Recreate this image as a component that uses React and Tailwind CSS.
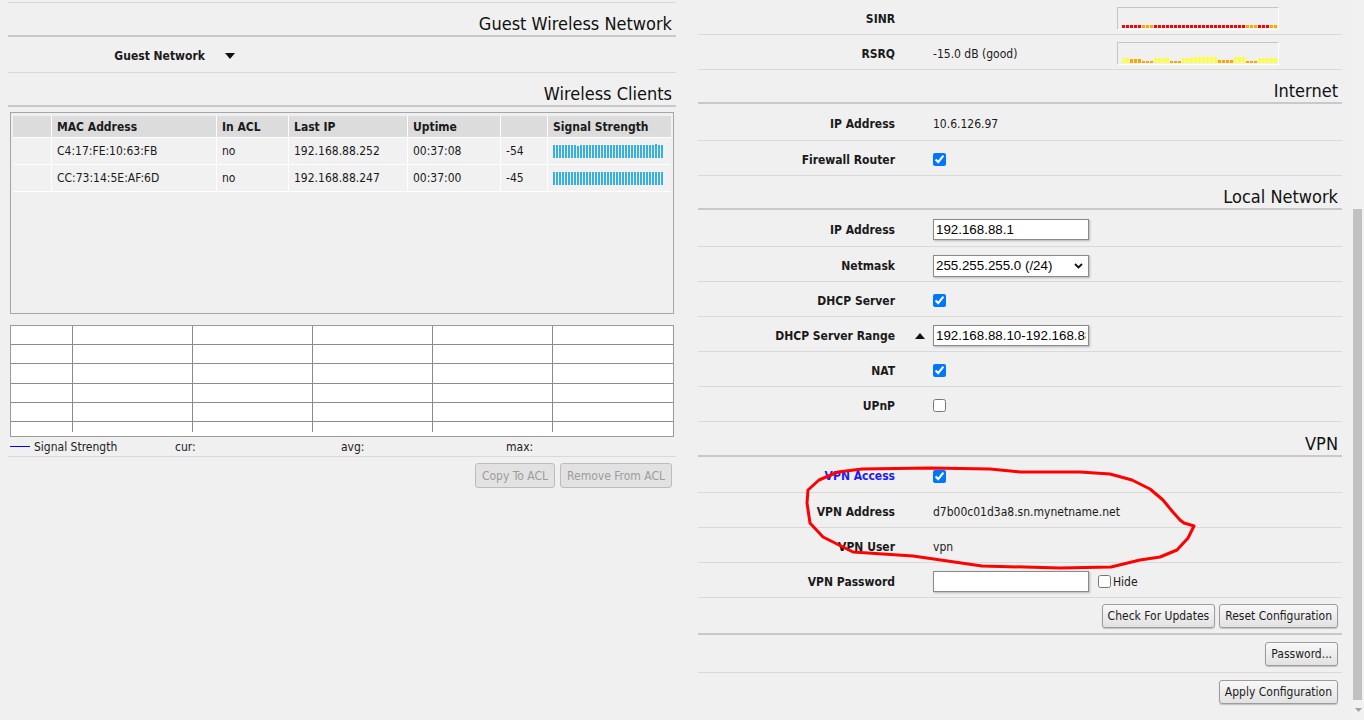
import React from "react";

const sinr = [
  "r","r","r","r","r","o","o","o",
  ...Array(23).fill("r"),
  "o","o","o","r","r","r","o","o",
];

// [color, height]
const rsrq = [
  ["y",5],["y",5],
  ["o",4],["o",4],["o",4],
  ["o",2],["o",2],["o",2],
  ["y",5],["y",5],["y",5],["y",5],
  ["o",2],["o",2],["o",2],
  ["y",5],["y",5],["y",5],
  ["y",6],["y",6],["y",6],["y",6],["y",6],["y",6],
  ["o",3],["o",3],["o",3],["o",3],
  ["y",6],["y",6],["y",6],
  ["o",2],["o",2],["o",2],
  ["y",5],["y",5],["y",5],["y",5],["y",5],
];

const clients = [
  { mac: "C4:17:FE:10:63:FB", acl: "no", ip: "192.168.88.252", up: "00:37:08", sig: "-54", bars: [13,13,13,13,13,13,13,13,12,13,13,13,13,13,13,13,13,13,13,13,13,13,13,13,13,13,13,13,13,13,13,13,13,13,14,13,13] },
  { mac: "CC:73:14:5E:AF:6D", acl: "no", ip: "192.168.88.247", up: "00:37:00", sig: "-45", bars: Array(37).fill(13) },
];

const rowCls = "flex items-center pt-[3px] border-b border-[#d9d9d9]";
const labelCls = "w-[197px] shrink-0 text-right font-bold text-[12px] text-[#1a1a1a]";

function Heading({ title, h = "h-[34px]" }) {
  return (
    <div className={`${h} flex items-end justify-end pr-[4px] pb-[2px] border-b-2 border-[#c9c9c9] text-[18px] leading-[18px] text-[#111]`}>
      {title}
    </div>
  );
}

function Check({ on }) {
  return <input type="checkbox" defaultChecked={on} className="m-0 w-[13px] h-[13px]" />;
}

function Field({ value, w = "w-[156px]" }) {
  return (
    <input
      type="text"
      defaultValue={value}
      className={`${w} h-[21px] border border-[#8a8a8a] bg-white px-[2px] text-[13.33px] font-['Liberation_Sans',sans-serif] text-black shadow-[1px_1px_2px_rgba(0,0,0,0.25)] outline-none`}
    />
  );
}

function Btn({ children, disabled }) {
  return (
    <button
      className={
        disabled
          ? "h-[25px] px-[6px] rounded-[3px] border border-[#bdbdbd] bg-[#e2e2e2] text-[12px] text-[#9c9c9c]"
          : "h-[24px] px-[5px] rounded-[3px] border border-[#9c9c9c] bg-linear-to-b from-[#f8f8f8] to-[#e2e2e2] text-[12px] text-[#1c1c1c] shadow-[0_1px_1px_rgba(0,0,0,0.2)]"
      }
    >
      {children}
    </button>
  );
}

function MiniChart({ children }) {
  return (
    <div className="w-[162px] h-[23px] border-t border-l border-[#c6c6c6] border-r border-b border-r-white border-b-white flex items-end gap-px pl-[4px] pb-px">
      {children}
    </div>
  );
}

function LeftColumn() {
  const th = "bg-[#dcdcdc] h-[21px] flex items-center px-[5px] font-bold text-[12px]";
  const td = "bg-[#f1f1f1] h-[26px] flex items-center px-[5px] text-[12px]";
  return (
    <div className="w-[668px] shrink-0">
      <div className="h-[3px] border-b border-[#d9d9d9]" />
      <Heading title="Guest Wireless Network" />
      <div className={`${rowCls} h-[36px]`}>
        <div className={labelCls}>Guest Network</div>
        <svg className="ml-[20px]" width="10" height="6" viewBox="0 0 10 6">
          <path d="M0 0 L10 0 L5 6 Z" fill="#111" />
        </svg>
      </div>
      <Heading title="Wireless Clients" />

      {/* clients table */}
      <div className="mt-[5px] ml-[2px] w-[664px] h-[202px] border border-[#a5a5a5] px-[2px] pt-[3px]">
        <div className="grid grid-cols-[38px_164px_71px_118px_92px_46px_1fr] gap-px bg-white pb-px">
          <div className={th}></div>
          <div className={th}>MAC Address</div>
          <div className={th}>In ACL</div>
          <div className={th}>Last IP</div>
          <div className={th}>Uptime</div>
          <div className={th}></div>
          <div className={th}>Signal Strength</div>
          {clients.map((c) => (
            <React.Fragment key={c.mac}>
              <div className={td}></div>
              <div className={td}>{c.mac}</div>
              <div className={td}>{c.acl}</div>
              <div className={td}>{c.ip}</div>
              <div className={td}>{c.up}</div>
              <div className={td}>{c.sig}</div>
              <div className={`${td} items-end pb-[6px]`}>
                <div className="flex items-end gap-px">
                  {c.bars.map((h, i) => (
                    <div key={i} className="w-[2px] bg-[#36afe6]" style={{ height: h }} />
                  ))}
                </div>
              </div>
            </React.Fragment>
          ))}
        </div>
      </div>

      {/* graph */}
      <div className="mt-[11px] ml-[2px] w-[664px] h-[112px] border border-[#9a9a9a] bg-white">
        <svg width="662" height="110" viewBox="0 0 662 110">
          {[61, 181, 301, 421, 541].map((x) => (
            <line key={x} x1={x + 0.5} y1="0" x2={x + 0.5} y2="106" stroke="#8c8c8c" />
          ))}
          {[18, 37, 57, 76, 95].map((y) => (
            <line key={y} x1="0" y1={y + 0.5} x2="662" y2={y + 0.5} stroke="#8c8c8c" />
          ))}
        </svg>
      </div>

      <div className="h-[20px] flex items-center border-b border-[#d9d9d9] text-[12px] text-[#222]">
        <div className="w-[167px] flex items-center">
          <div className="ml-[2px] w-[20px] h-px bg-[#0000ff]" />
          <span className="ml-[4px]">Signal Strength</span>
        </div>
        <div className="w-[166px]">cur:</div>
        <div className="w-[165px]">avg:</div>
        <div>max:</div>
      </div>
      <div className="flex justify-end gap-[5px] pt-[6px] pr-[4px]">
        <Btn disabled>Copy To ACL</Btn>
        <Btn disabled>Remove From ACL</Btn>
      </div>
    </div>
  );
}

function RightColumn() {
  const val = "ml-[38px] text-[12px] text-[#1a1a1a]";
  return (
    <div className="w-[644px] shrink-0">
      <div className={`${rowCls} h-[35px]`}>
        <div className={labelCls}>SINR</div>
        <div className="ml-[38px] w-[184px]" />
        <MiniChart>
          {sinr.map((c, i) => (
            <div key={i} className={`w-[3px] h-[3px] ${c === "r" ? "bg-[#ff0000]" : "bg-[#ffa500]"}`} />
          ))}
        </MiniChart>
      </div>
      <div className={`${rowCls} h-[35px]`}>
        <div className={labelCls}>RSRQ</div>
        <div className={`${val} w-[184px]`}>-15.0 dB (good)</div>
        <MiniChart>
          {rsrq.map(([c, h], i) => (
            <div key={i} className={`w-[3px] ${c === "y" ? "bg-[#ffff3a]" : "bg-[#ffa500]"}`} style={{ height: h }} />
          ))}
        </MiniChart>
      </div>

      <Heading title="Internet" />
      <div className={`${rowCls} h-[37px]`}>
        <div className={labelCls}>IP Address</div>
        <div className={val}>10.6.126.97</div>
      </div>
      <div className={`${rowCls} h-[35px]`}>
        <div className={labelCls}>Firewall Router</div>
        <div className="ml-[38px] flex"><Check on /></div>
      </div>

      <Heading title="Local Network" />
      <div className={`${rowCls} h-[37px]`}>
        <div className={labelCls}>IP Address</div>
        <div className="ml-[38px] flex"><Field value="192.168.88.1" /></div>
      </div>
      <div className={`${rowCls} h-[35px]`}>
        <div className={labelCls}>Netmask</div>
        <div className="ml-[38px] w-[156px] h-[22px] border border-[#8a8a8a] bg-white flex items-center justify-between pl-[2px] pr-[5px] text-[13.33px] font-['Liberation_Sans',sans-serif] text-black shadow-[1px_1px_2px_rgba(0,0,0,0.25)]">
          <span>255.255.255.0 (/24)</span>
          <svg width="9" height="6" viewBox="0 0 9 6">
            <path d="M1 1 L4.5 4.5 L8 1" fill="none" stroke="#111" strokeWidth="1.8" />
          </svg>
        </div>
      </div>
      <div className={`${rowCls} h-[35px]`}>
        <div className={labelCls}>DHCP Server</div>
        <div className="ml-[38px] flex"><Check on /></div>
      </div>
      <div className={`${rowCls} h-[35px]`}>
        <div className={labelCls}>DHCP Server Range</div>
        <svg className="ml-[20px]" width="10" height="6" viewBox="0 0 10 6">
          <path d="M0 6 L10 6 L5 0 Z" fill="#111" />
        </svg>
        <div className="ml-[8px] flex"><Field value="192.168.88.10-192.168.88.254" /></div>
      </div>
      <div className={`${rowCls} h-[35px]`}>
        <div className={labelCls}>NAT</div>
        <div className="ml-[38px] flex"><Check on /></div>
      </div>
      <div className={`${rowCls} h-[35px]`}>
        <div className={labelCls}>UPnP</div>
        <div className="ml-[38px] flex"><Check /></div>
      </div>

      <Heading title="VPN" h="h-[35px]" />
      <div className={`${rowCls} h-[36px]`}>
        <div className={`${labelCls} text-[#1a1aff]`}>VPN Access</div>
        <div className="ml-[38px] flex"><Check on /></div>
      </div>
      <div className={`${rowCls} h-[35px]`}>
        <div className={labelCls}>VPN Address</div>
        <div className={val}>d7b00c01d3a8.sn.mynetname.net</div>
      </div>
      <div className={`${rowCls} h-[35px]`}>
        <div className={labelCls}>VPN User</div>
        <div className={val}>vpn</div>
      </div>
      <div className={`${rowCls} h-[35px]`}>
        <div className={labelCls}>VPN Password</div>
        <div className="ml-[38px] flex"><Field value="" /></div>
        <div className="ml-[9px] flex items-center text-[12px]">
          <Check />
          <span className="ml-[2px]">Hide</span>
        </div>
      </div>

      <div className="h-[37px] flex items-center justify-end gap-[4px] pr-[4px] border-b-2 border-[#c9c9c9]">
        <Btn>Check For Updates</Btn>
        <Btn>Reset Configuration</Btn>
      </div>
      <div className="h-[38px] flex items-center justify-end pr-[4px] border-b border-[#d9d9d9]">
        <Btn>Password...</Btn>
      </div>
      <div className="h-[38px] flex items-center justify-end pr-[4px]">
        <Btn>Apply Configuration</Btn>
      </div>
    </div>
  );
}

export default function App() {
  return (
    <div className="relative w-[1364px] h-[720px] overflow-hidden bg-[#f0f0f0] flex font-['DejaVu_Sans_Condensed','DejaVu_Sans',sans-serif] text-[#1a1a1a]">
      <div className="flex gap-[22px] pl-[8px] pr-[10px]">
        <LeftColumn />
        <RightColumn />
      </div>

      {/* scrollbar */}
      <div className="w-[12px] flex flex-col bg-[#f1f1f1]">
        <div className="h-[209px]" />
        <div className="ml-px w-[9px] h-[491px] bg-[#c1c1c1]" />
        <div className="flex-1 flex items-center justify-center">
          <svg width="7" height="4" viewBox="0 0 7 4">
            <path d="M0 0 L7 0 L3.5 4 Z" fill="#a3a3a3" />
          </svg>
        </div>
      </div>

      {/* hand-drawn annotation */}
      <svg className="absolute inset-0 pointer-events-none" width="1364" height="720" viewBox="0 0 1364 720">
        <path
          d="M808 490 L819 480 L838 472 L862 469 L930 468 L990 469 L1020 472 L1080 472 L1110 474 L1132 480 L1150 489 L1163 500 L1172 511 L1180 520 L1184 523 L1194 526 L1188 538 L1177 550 L1160 557 L1140 560 L1111 567 L1060 568 L982 566 L913 556 L853 552 L823 537 L810 523 L807 503 L808 490"
          fill="none"
          stroke="#ff0000"
          strokeWidth="3"
          strokeLinejoin="round"
          strokeLinecap="round"
        />
      </svg>
    </div>
  );
}
